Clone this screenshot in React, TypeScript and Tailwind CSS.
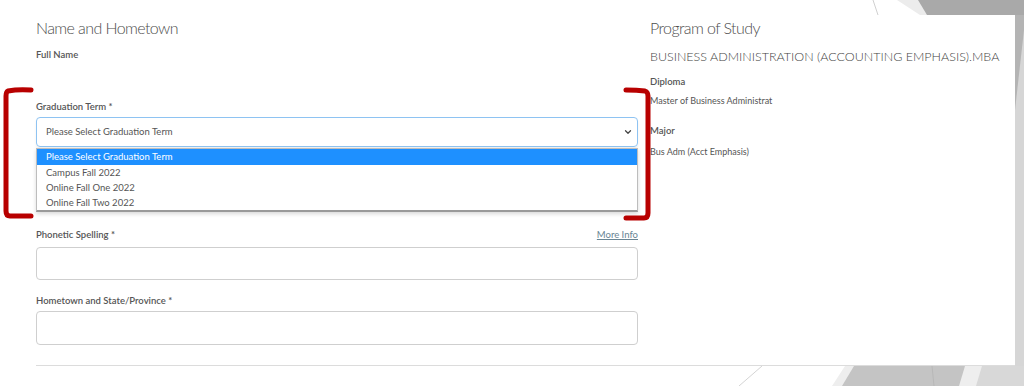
import { ChevronDown } from 'lucide-react';

const TERMS = ['Please Select Graduation Term', 'Campus Fall 2022', 'Online Fall One 2022', 'Online Fall Two 2022'];

function Backdrop() {
  return (
    <svg className="absolute inset-0" width="1024" height="386" viewBox="0 0 1024 386">
      {/* top right slide shapes */}
      <line x1="873" y1="0" x2="878" y2="15" stroke="#d0d0d0" strokeWidth="1" />
      <polygon points="897,0 1024,0 1024,15 920,15" fill="#ececec" />
      <polygon points="918,0 1024,0 1024,15 927,15" fill="#a9a9a9" />
      {/* right strip */}
      <rect x="1015" y="15" width="9" height="351" fill="#d6d6d6" />
      <polygon points="1015,15 1024,15 1024,30 1015,110" fill="#b4b4b4" />
      {/* bottom slide shapes */}
      <line x1="762" y1="366" x2="739" y2="386" stroke="#d4d4d4" strokeWidth="1" />
      <polygon points="845,366 1024,366 1024,386 832,386" fill="#eeeeee" />
      <polygon points="854,366 965,366 959,386 842,386" fill="#c4c4c4" />
      <line x1="932" y1="366" x2="934" y2="386" stroke="#b8b8b8" strokeWidth="1" />
      <polygon points="982,366 1024,366 1024,386 976,386" fill="#d8d8d8" />
    </svg>
  );
}

function Brackets() {
  return (
    <svg className="absolute inset-0 pointer-events-none" width="1024" height="386" viewBox="0 0 1024 386">
      <path d="M31 90 Q18 89 8 91 Q6 92 6 96 L6 211 Q6 216 10 216 L31 216" fill="none" stroke="#b80000" strokeWidth="5" strokeLinecap="round" strokeLinejoin="round" />
      <path d="M626 90 Q637 90 645 91 Q648 92 648 96 L648 213 Q648 218 644 218 L626 218" fill="none" stroke="#b80000" strokeWidth="5" strokeLinecap="round" strokeLinejoin="round" />
    </svg>
  );
}

export default function App() {
  return (
    <div className="relative w-[1024px] h-[386px] overflow-hidden bg-white text-[#555] font-['Lato',sans-serif]">
      <Backdrop />

      {/* Screenshot panel */}
      <div className="relative mt-[15px] w-[1015px] h-[351px] bg-white">
        <div className="ml-[36px] h-full flex flex-col border-b border-[#dcdcdc]">
          <div className="flex">
            {/* Left column */}
            <div className="w-[602px] flex flex-col">
              <h2 className="mt-[2px] h-[22px] leading-[22px] text-[16px] tracking-[-0.6px] font-light text-[#4d4d4d]">Name and Hometown</h2>
              <div className="mt-[9px] h-[14px] leading-[14px] text-[9.5px] font-semibold text-[#555]">Full Name</div>

              <div className="mt-[38px] h-[14px] leading-[14px] text-[9.5px] font-semibold text-[#555]">Graduation Term *</div>
              <div className="relative mt-[3px]">
                <div className="h-[30px] rounded-[4px] border border-[#8ec3f2] shadow-[0_2px_3px_rgba(0,0,0,0.06)] flex items-center justify-between pl-[9px] pr-[4px]">
                  <span className="text-[9.5px] text-[#555]">Please Select Graduation Term</span>
                  <ChevronDown size={10} strokeWidth={3} className="text-[#444]" />
                </div>
                {/* open dropdown */}
                <ul className="absolute left-0 right-0 top-[31px] bg-white border border-[#bdbdbd] border-b-[2px] border-b-[#9a9a9a] shadow-[0_2px_4px_rgba(0,0,0,0.15)]">
                  {TERMS.map((t, i) => (
                    <li
                      key={t}
                      className={
                        i === 0
                          ? 'h-[16px] leading-[16px] pl-[9px] text-[9.5px] bg-[#1e90ff] text-white'
                          : 'h-[15px] leading-[15px] pl-[9px] text-[9.5px] text-[#555]'
                      }
                    >
                      {t}
                    </li>
                  ))}
                </ul>
              </div>

              <div className="mt-[81px] h-[14px] flex items-center justify-between">
                <span className="text-[9.5px] font-semibold text-[#555]">Phonetic Spelling *</span>
                <span className="text-[9.5px] text-[#6a8594] underline">More Info</span>
              </div>
              <div className="mt-[5px] h-[33px] rounded-[4px] border border-[#cfcfcf]" />

              <div className="mt-[14px] h-[14px] leading-[14px] text-[9.5px] font-semibold text-[#555]">Hometown and State/Province *</div>
              <div className="mt-[3px] h-[34px] rounded-[4px] border border-[#cfcfcf]" />
            </div>

            {/* Right column */}
            <div className="ml-[12px] flex flex-col">
              <h2 className="mt-[2px] h-[22px] leading-[22px] text-[16px] tracking-[-0.6px] font-light text-[#4d4d4d]">Program of Study</h2>
              <div className="mt-[10px] h-[16px] leading-[16px] text-[12.5px] font-light text-[#444] whitespace-nowrap">
                BUSINESS ADMINISTRATION (ACCOUNTING EMPHASIS).MBA
              </div>
              <div className="mt-[10px] h-[14px] leading-[14px] text-[9.5px] font-semibold text-[#555]">Diploma</div>
              <div className="mt-[5px] h-[14px] leading-[14px] text-[9px] text-[#555]">Master of Business Administrat</div>
              <div className="mt-[16px] h-[14px] leading-[14px] text-[9.5px] font-semibold text-[#555]">Major</div>
              <div className="mt-[7px] h-[14px] leading-[14px] text-[9px] text-[#555]">Bus Adm (Acct Emphasis)</div>
            </div>
          </div>
        </div>
      </div>

      <Brackets />
    </div>
  );
}
